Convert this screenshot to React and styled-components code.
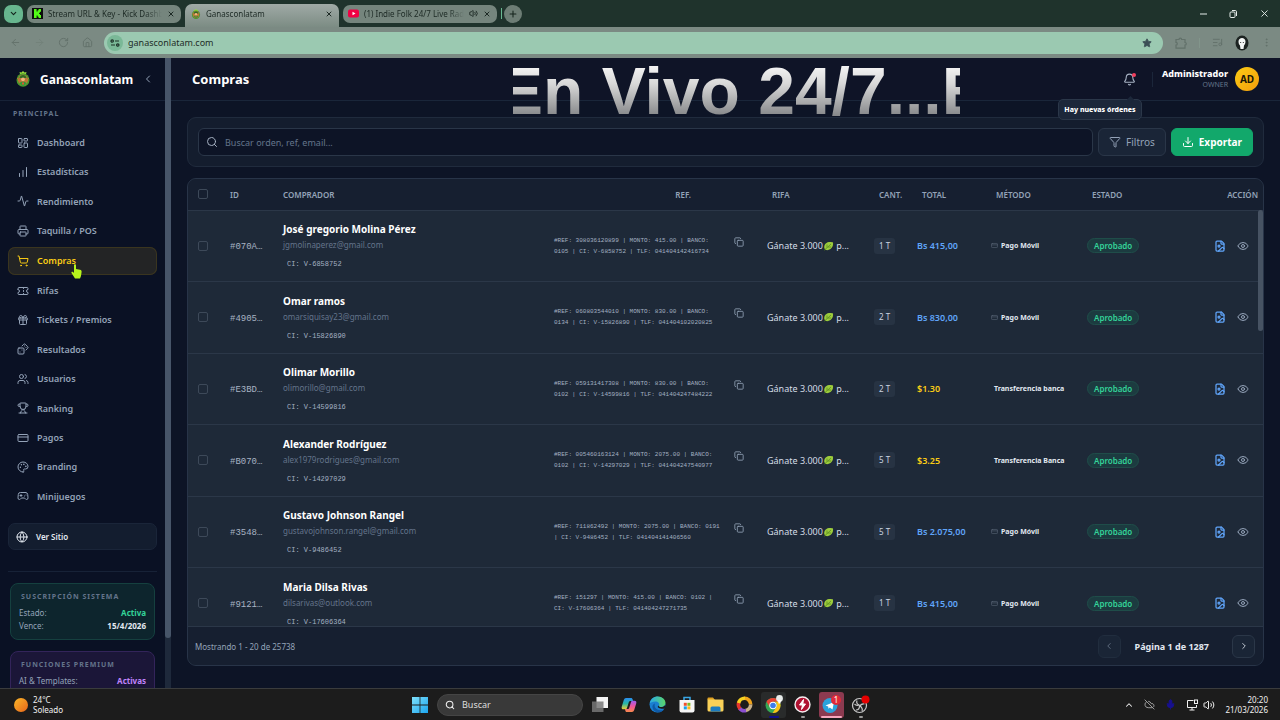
import { useState } from 'react';
import styled, { createGlobalStyle, css } from 'styled-components';
import {
  Activity,
  ArrowLeft,
  ArrowRight,
  Bell,
  ChartNoAxesColumnIncreasing,
  ChevronDown,
  ChevronLeft,
  ChevronRight,
  ChevronUp,
  CloudOff,
  Copy,
  CreditCard,
  Dices,
  Download,
  EllipsisVertical,
  Eye,
  FileImage,
  Funnel,
  Gamepad2,
  Gift,
  Globe,
  House,
  LayoutDashboard,
  ListMusic,
  Mic,
  Palette,
  Plus,
  Printer,
  RotateCw,
  Search,
  ShoppingCart,
  Star,
  Ticket,
  Trophy,
  Users,
  Volume2,
  X,
} from 'lucide-react';

const GlobalStyle = createGlobalStyle`
  * {
    box-sizing: border-box;
  }
  body {
    margin: 0;
    background: #0d1426;
    font-family: 'Noto Sans', 'Open Sans', sans-serif;
    font-size: 8px;
    color: #e2e8f0;
  }
  button, input {
    font-family: inherit;
  }
  button {
    padding: 0;
    border: 0;
    background: none;
    color: inherit;
    cursor: pointer;
  }
  svg {
    display: block;
    flex-shrink: 0;
  }
`;

const Screen = styled.div`
  display: flex;
  flex-direction: column;
  height: 100vh;
  overflow: hidden;
`;

/* browser */
const TabStrip = styled.div`
  display: flex;
  align-items: center;
  gap: 4px;
  height: 27px;
  padding: 0 6px 0 4px;
  background: #1f332c;
`;
const TabSearch = styled.button`
  display: flex;
  align-items: center;
  justify-content: center;
  width: 19px;
  height: 18px;
  border-radius: 7px;
  background: #67b68e;
  color: #14231c;
`;
const Tab = styled.div`
  display: flex;
  align-items: center;
  gap: 5px;
  width: 154px;
  height: ${(props) => (props.$active ? '23px' : '18px')};
  align-self: ${(props) => (props.$active ? 'flex-end' : 'center')};
  padding: ${(props) => (props.$active ? '0 6px 4px' : '0 6px 0 5px')};
  border-radius: ${(props) => (props.$active ? '7px 7px 0 0' : '7px')};
  background: ${(props) =>
    props.$active ? 'linear-gradient(#a0aaa6, #7c8c84)' : '#75857d'};
  color: #1c2924;
`;
const TabTitle = styled.span`
  flex: 1;
  min-width: 0;
  overflow: hidden;
  white-space: nowrap;
  font-size: 8px;
  mask-image: linear-gradient(to right, #000 85%, transparent);
`;
const TabEnd = styled.div`
  display: flex;
  align-items: center;
  gap: 2px;
`;
const NewTab = styled.button`
  display: flex;
  align-items: center;
  justify-content: center;
  width: 18px;
  height: 18px;
  border-radius: 9px;
  background: #6d7d75;
  color: #14231c;
`;
const TabDivider = styled.div`
  width: 1px;
  height: 11px;
  background: #69b892;
`;
const WindowButtons = styled.div`
  display: flex;
  gap: 20px;
  margin-left: auto;
  padding-right: 4px;
  color: #e5ece9;
`;
const Toolbar = styled.div`
  display: flex;
  align-items: center;
  height: 31px;
  padding: 0 8px;
  background: #7b8a83;
  color: #62716a;
`;
const NavButtons = styled.div`
  display: flex;
  gap: 13px;
  padding: 0 11px 0 2px;
`;
const AddressBar = styled.div`
  flex: 1;
  display: flex;
  align-items: center;
  gap: 5px;
  height: 22px;
  padding: 0 11px 0 3px;
  border-radius: 11px;
  background: #9bc9b1;
  color: #33443d;
`;
const SiteInfo = styled.button`
  display: flex;
  align-items: center;
  justify-content: center;
  width: 16px;
  height: 16px;
  border-radius: 8px;
  background: #7ab897;
`;
const Url = styled.input`
  flex: 1;
  border: 0;
  padding: 0;
  outline: none;
  background: none;
  color: #1e2d27;
  font-size: 9px;
`;
const ToolbarRight = styled.div`
  display: flex;
  align-items: center;
  gap: 12px;
  padding-left: 12px;
`;
const ToolbarLine = styled.div`
  width: 1px;
  height: 10px;
  background: #82958b;
`;

/* page */
const Page = styled.div`
  position: relative;
  flex: 1;
  display: flex;
  min-height: 0;
`;
const Sidebar = styled.aside`
  display: flex;
  flex-direction: column;
  width: 165px;
  overflow: hidden;
  background: #0a1124;
`;
const Brand = styled.div`
  display: flex;
  align-items: center;
  flex-shrink: 0;
  gap: 9px;
  height: 43px;
  padding: 0 15px;
  border-bottom: 1px solid #172237;
  color: #94a3b8;
`;
const BrandName = styled.strong`
  flex: 1;
  color: #fff;
  font-size: 12px;
`;
const GroupLabel = styled.div`
  padding: ${(props) => props.$pad || '0'};
  color: #64748b;
  font-size: 7px;
  font-weight: 700;
  line-height: 10px;
  letter-spacing: 1px;
  text-transform: uppercase;
`;
const Menu = styled.nav`
  display: flex;
  flex-direction: column;
  flex-shrink: 0;
  justify-content: space-between;
  height: 381px;
  padding: 0 8px;
`;
const MenuLink = styled.a`
  position: relative;
  display: flex;
  align-items: center;
  gap: 8px;
  height: 27px;
  padding: 0 9px;
  border-radius: 7px;
  color: #94a3b8;
  font-size: 9px;
  font-weight: 600;
  text-decoration: none;
  ${(props) =>
    props.$active &&
    css`
      height: 28px;
      background: #232425;
      box-shadow: inset 0 0 0 1px #3a351f;
      color: #facc15;
    `}
`;
const HandCursor = styled.svg`
  position: absolute;
  left: 63px;
  top: 17px;
`;
const SiteLink = styled.a`
  display: flex;
  align-items: center;
  flex-shrink: 0;
  gap: 8px;
  height: 27px;
  margin: 13px 8px 21px;
  padding: 0 7px;
  border: 1px solid #1a2539;
  border-radius: 7px;
  background: #131d2f;
  color: #e2e8f0;
  font-size: 8px;
  font-weight: 600;
  text-decoration: none;
`;
const StatusCards = styled.div`
  display: flex;
  flex-direction: column;
  gap: 11px;
  margin: 0 8px;
  padding: 11px 2px 0;
  border-top: 1px solid #172237;
`;
const StatusCard = styled.section`
  min-height: 57px;
  padding: 8px 8px 7px;
  border: 1px solid ${(props) => (props.$premium ? '#33245a' : '#15403f')};
  border-radius: 8px;
  background: ${(props) => (props.$premium ? '#1b1638' : '#0d252d')};
`;
const StatusRow = styled.div`
  display: flex;
  justify-content: space-between;
  margin-top: 1px;
  color: #94a3b8;
  font-size: 8px;
  line-height: 12px;
  b {
    color: ${(props) => props.$color || '#e2e8f0'};
  }
`;
const ScrollTrack = styled.div`
  width: 6px;
  background: #1e293b;
`;
const ScrollThumb = styled.div`
  height: 92%;
  border-radius: 0 0 3px 3px;
  background: #475569;
`;

const Main = styled.main`
  flex: 1;
  display: flex;
  flex-direction: column;
  min-width: 0;
  background: #0d1426;
`;
const Header = styled.header`
  display: flex;
  align-items: center;
  flex-shrink: 0;
  height: 43px;
  padding: 0 21px;
  border-bottom: 1px solid #1a263a;
  background: #0f1427;
`;
const Title = styled.h1`
  flex: 1;
  margin: 0;
  color: #fff;
  font-size: 13px;
`;
const BellButton = styled.button`
  position: relative;
  color: #a8b3c4;
`;
const BellDot = styled.span`
  position: absolute;
  top: 0;
  right: 0;
  width: 4px;
  height: 4px;
  border-radius: 50%;
  background: #f43f5e;
`;
const BellTip = styled.span`
  position: absolute;
  top: 26px;
  right: -6px;
  z-index: 2;
  width: 84px;
  padding: 4px 0;
  border: 1px solid #2b3749;
  border-radius: 5px;
  background: #1c273a;
  color: #fff;
  font-size: 7px;
  font-weight: 800;
  line-height: 11px;
  white-space: nowrap;
  &::before {
    content: '';
    position: absolute;
    top: -3px;
    right: 8px;
    width: 5px;
    height: 5px;
    background: #1c273a;
    transform: rotate(45deg);
  }
`;
const HeaderLine = styled.div`
  width: 1px;
  height: 15px;
  margin: 0 9px 0 16px;
  background: #1b263a;
`;
const UserInfo = styled.div`
  margin-right: 7px;
  text-align: right;
`;
const UserName = styled.div`
  color: #fff;
  font-size: 9px;
  font-weight: 800;
  line-height: 12px;
`;
const UserRole = styled.div`
  color: #64748b;
  font-size: 7px;
  line-height: 10px;
`;
const Avatar = styled.div`
  display: flex;
  align-items: center;
  justify-content: center;
  width: 24px;
  height: 24px;
  border-radius: 50%;
  background: linear-gradient(135deg, #facc15, #f59e0b);
  color: #1a1608;
  font-size: 10px;
  font-weight: 700;
`;
const Marquee = styled.div`
  position: absolute;
  z-index: 3;
  top: -3px;
  left: 513px;
  width: 447px;
  overflow: hidden;
  font-family: 'Liberation Sans', sans-serif;
  font-size: 66px;
  font-weight: 700;
  line-height: 72px;
  text-indent: -14px;
  white-space: nowrap;
  color: transparent;
  background: linear-gradient(#f4f4f4 15%, #d8d8d8 40%, #858789 85%);
  background-clip: text;
  pointer-events: none;
`;

const Content = styled.div`
  flex: 1;
  display: flex;
  flex-direction: column;
  gap: 11px;
  min-height: 0;
  padding: 16px 16px 22px;
`;
const FilterCard = styled.form`
  display: flex;
  flex-shrink: 0;
  gap: 5px;
  padding: 10px;
  border: 1px solid #202b3d;
  border-radius: 9px;
  background: #141d2e;
`;
const SearchBox = styled.label`
  flex: 1;
  display: flex;
  align-items: center;
  gap: 7px;
  height: 28px;
  padding: 0 7px;
  border: 1px solid #2a3648;
  border-radius: 6px;
  background: #0d1426;
  color: #a5b1c2;
`;
const SearchInput = styled.input`
  flex: 1;
  padding: 0;
  border: 0;
  outline: none;
  background: none;
  color: #e2e8f0;
  font-size: 9px;
  &::placeholder {
    color: #64748b;
  }
`;
const ToolButton = styled.button`
  display: flex;
  align-items: center;
  justify-content: center;
  gap: 5px;
  padding: 0 10px;
  border: 1px solid #2a3648;
  border-radius: 6px;
  background: #1a2537;
  color: #94a3b8;
  font-size: 10px;
  ${(props) =>
    props.$primary &&
    css`
      border-color: #12a86b;
      background: #12a86b;
      color: #fff;
      font-weight: 700;
    `}
`;
const TableCard = styled.section`
  flex: 1;
  display: flex;
  flex-direction: column;
  min-height: 0;
  overflow: hidden;
  border: 1px solid #283448;
  border-radius: 9px;
  background: #1e2938;
`;
const TableScroll = styled.div`
  position: relative;
  flex: 1;
  min-height: 0;
  overflow: hidden;
`;
const TableThumb = styled.div`
  position: absolute;
  top: 31px;
  right: 0;
  width: 5px;
  height: 121px;
  border-radius: 3px;
  background: #475363;
`;
const Table = styled.table`
  width: 100%;
  table-layout: fixed;
  border-collapse: collapse;
`;
const Col = styled.col`
  width: ${(props) => props.$width};
`;
const Th = styled.th`
  height: 31px;
  padding: 0 ${(props) => props.$right || '0'} 0 ${(props) => props.$left || '16px'};
  border-bottom: 1px solid #2b3748;
  background: #161f30;
  color: #94a3b8;
  font-size: 8px;
  font-weight: 600;
  text-align: ${(props) => (props.$right ? 'right' : 'left')};
  white-space: nowrap;
`;
const Td = styled.td`
  height: 71px;
  padding: 0 0 0 ${(props) => props.$left || '11px'};
  border-bottom: 1px solid #2b3748;
  font-size: 9px;
  white-space: nowrap;
  tr:nth-child(even) > & {
    height: 72px;
  }
`;
const Check = styled.input.attrs({ type: 'checkbox' })`
  display: block;
  appearance: none;
  width: 10px;
  height: 10px;
  margin: 0;
  border: 1px solid #3d4959;
  border-radius: 2px;
`;
const OrderId = styled.span`
  color: #a8b3c3;
  font-family: 'Liberation Mono', monospace;
  font-size: 9px;
`;
const BuyerName = styled.div`
  color: #fff;
  font-size: 10px;
  font-weight: 700;
  line-height: 16px;
`;
const BuyerMail = styled.div`
  color: #64748b;
  font-size: 8px;
  line-height: 16px;
`;
const BuyerCi = styled.div`
  padding: 5px 4px 0;
  color: #a3b0c2;
  font-family: 'Liberation Mono', monospace;
  font-size: 7px;
  line-height: 12px;
`;
const RefBox = styled.div`
  display: flex;
  align-items: flex-start;
  justify-content: space-between;
  padding-right: 12px;
  color: #94a3b8;
`;
const RefText = styled.span`
  width: 172px;
  color: #a3b0c2;
  font-family: 'Liberation Mono', monospace;
  font-size: 6px;
  line-height: 11px;
  white-space: normal;
`;
const CopyButton = styled.button`
  padding-top: 2px;
`;
const Raffle = styled.span`
  display: flex;
  align-items: center;
  color: #d4dce6;
  font-size: 9px;
`;
const Qty = styled.span`
  display: inline-block;
  padding: 0 5px;
  border-radius: 3px;
  background: #273343;
  color: #cbd5e1;
  font-size: 8px;
  line-height: 16px;
`;
const Total = styled.span`
  color: ${(props) => (props.$usd ? '#facc15' : '#60a5fa')};
  font-size: 9px;
  font-weight: 600;
`;
const Method = styled.span`
  display: flex;
  align-items: center;
  gap: 3px;
  padding-left: ${(props) => (props.$plain ? '3px' : '0')};
  color: #e2e8f0;
  font-size: 7px;
  font-weight: 700;
  svg {
    color: #5b6879;
  }
`;
const Badge = styled.span`
  display: inline-block;
  padding: 0 6px;
  border: 1px solid #1f4d49;
  border-radius: 8px;
  background: #1c3b40;
  color: #34d399;
  font-size: 8px;
  font-weight: 600;
  line-height: 13px;
`;
const Actions = styled.div`
  display: flex;
  justify-content: flex-end;
  gap: 11px;
  padding-right: 14px;
  color: #94a3b8;
`;
const ProofButton = styled.button`
  color: #60a5fa;
`;
const TableFooter = styled.footer`
  display: flex;
  align-items: center;
  justify-content: space-between;
  flex-shrink: 0;
  height: 39px;
  padding: 0 8px 0 7px;
  border-top: 1px solid #2b3748;
  background: #161f30;
  color: #94a3b8;
  font-size: 8px;
`;
const Pager = styled.div`
  display: flex;
  align-items: center;
`;
const PageNumber = styled.span`
  padding: 0 23px 0 14px;
  color: #e2e8f0;
  font-size: 9px;
  font-weight: 700;
`;
const PageButton = styled.button`
  display: flex;
  align-items: center;
  justify-content: center;
  width: 23px;
  height: 23px;
  border: 1px solid #2b3748;
  border-radius: 6px;
  background: #1a2536;
  color: #e2e8f0;
  &:disabled {
    border-color: #212d3e;
    color: #6a778a;
  }
`;

/* taskbar */
const Taskbar = styled.div`
  display: grid;
  grid-template-columns: 1fr auto 1fr;
  align-items: center;
  height: 32px;
  border-top: 1px solid #3a3c3d;
  background: #1c1c1c;
  color: #f1f1f1;
  font-size: 8px;
`;
const Weather = styled.div`
  display: flex;
  align-items: center;
  gap: 5px;
  padding-left: 14px;
  line-height: 10px;
`;
const Sun = styled.span`
  width: 14px;
  height: 14px;
  border-radius: 50%;
  background: linear-gradient(135deg, #fbb829, #e8651a);
`;
const Apps = styled.div`
  display: flex;
  align-items: center;
`;
const AppButton = styled.button`
  position: relative;
  display: flex;
  align-items: center;
  justify-content: center;
  width: 25px;
  height: 26px;
  margin: 0 2px;
  border-radius: 3px;
  background: ${(props) => props.$bg || 'none'};
  ${(props) =>
    props.$mark &&
    css`
      &::after {
        content: '';
        position: absolute;
        bottom: 0;
        width: ${props.$markWidth || '4px'};
        height: 2px;
        border-radius: 1px;
        background: ${props.$mark};
      }
    `}
`;
const TaskSearch = styled.label`
  display: flex;
  align-items: center;
  gap: 7px;
  width: 146px;
  height: 22px;
  margin: 0 2px 0 3px;
  padding: 0 7px;
  border: 1px solid #454545;
  border-radius: 11px;
  background: #393939;
`;
const TaskInput = styled.input`
  width: 100%;
  padding: 0;
  border: 0;
  outline: none;
  background: none;
  color: #fff;
  font-size: 9px;
  &::placeholder {
    color: #dedede;
  }
`;
const Tray = styled.div`
  display: flex;
  align-items: center;
  justify-content: flex-end;
  gap: 10px;
  padding-right: 12px;
`;
const TrayPair = styled.div`
  display: flex;
  gap: 5px;
`;
const Clock = styled.div`
  font-size: 8px;
  line-height: 10px;
  text-align: right;
`;

const menu = [
  { label: 'Dashboard', icon: LayoutDashboard },
  { label: 'Estadísticas', icon: ChartNoAxesColumnIncreasing },
  { label: 'Rendimiento', icon: Activity },
  { label: 'Taquilla / POS', icon: Printer },
  { label: 'Compras', icon: ShoppingCart },
  { label: 'Rifas', icon: Ticket },
  { label: 'Tickets / Premios', icon: Gift },
  { label: 'Resultados', icon: Dices },
  { label: 'Usuarios', icon: Users },
  { label: 'Ranking', icon: Trophy },
  { label: 'Pagos', icon: CreditCard },
  { label: 'Branding', icon: Palette },
  { label: 'Minijuegos', icon: Gamepad2 },
];

const orders = [
  {
    id: '#070A…',
    name: 'José gregorio Molina Pérez',
    mail: 'jgmolinaperez@gmail.com',
    ci: 'V-6858752',
    ref: '#REF: 308036120899 | MONTO: 415.00 | BANCO: 0105 | CI: V-6858752 | TLF: 041404142416734',
    qty: 1,
    total: 'Bs 415,00',
    method: 'Pago Móvil',
  },
  {
    id: '#4905…',
    name: 'Omar ramos',
    mail: 'omarsiquisay23@gmail.com',
    ci: 'V-15826890',
    ref: '#REF: 060803544010 | MONTO: 830.00 | BANCO: 0134 | CI: V-15826890 | TLF: 041404102020825',
    qty: 2,
    total: 'Bs 830,00',
    method: 'Pago Móvil',
  },
  {
    id: '#E3BD…',
    name: 'Olimar Morillo',
    mail: 'olimorillo@gmail.com',
    ci: 'V-14599816',
    ref: '#REF: 059131417308 | MONTO: 830.00 | BANCO: 0102 | CI: V-14599816 | TLF: 041404247484222',
    qty: 2,
    total: '$1.30',
    method: 'Transferencia banca',
  },
  {
    id: '#B070…',
    name: 'Alexander Rodríguez',
    mail: 'alex1979rodrigues@gmail.com',
    ci: 'V-14297029',
    ref: '#REF: 005460163124 | MONTO: 2075.00 | BANCO: 0102 | CI: V-14297029 | TLF: 041404247540977',
    qty: 5,
    total: '$3.25',
    method: 'Transferencia Banca',
  },
  {
    id: '#3548…',
    name: 'Gustavo Johnson Rangel',
    mail: 'gustavojohnson.rangel@gmail.com',
    ci: 'V-9486452',
    ref: '#REF: 711862492 | MONTO: 2075.00 | BANCO: 0191 | CI: V-9486452 | TLF: 041404141406560',
    qty: 5,
    total: 'Bs 2.075,00',
    method: 'Pago Móvil',
  },
  {
    id: '#9121…',
    name: 'Maria Dilsa Rivas',
    mail: 'dilsarivas@outlook.com',
    ci: 'V-17606364',
    ref: '#REF: 151297 | MONTO: 415.00 | BANCO: 0102 | CI: V-17606364 | TLF: 041404247271735',
    qty: 1,
    total: 'Bs 415,00',
    method: 'Pago Móvil',
  },
];

function Crest({ size }) {
  return (
    <svg width={size} height={size} viewBox='0 0 16 16'>
      <path d='M8 0l1.5 1.5L11.500 1 11 3H5l-.5-2 2 .5z' fill='#9bdc3c' />
      <ellipse cx='8' cy='9' rx='6.5' ry='6.8' fill='#4c9a2c' />
      <ellipse cx='8' cy='9' rx='4.9' ry='5.4' fill='#b5793a' />
      <path d='M4.500 7c.3-4 6.700-4 7 0z' fill='#2f6b25' />
      <circle cx='8' cy='8.300' r='1.900' fill='#f0b27a' />
      <path d='M4.300 12.500c1-2.500 6.400-2.500 7.400 0L8 15.200z' fill='#2f9a3c' />
      <path d='M7 11.500h2v2H7z' fill='#e2542d' />
      <path d='M2.300 7.500c1 0 1.500 1 1.500 2.500M13.700 7.500c-1 0-1.500 1-1.500 2.500' stroke='#e06a2c' fill='none' />
    </svg>
  );
}

function Leaf() {
  return (
    <svg width='11' height='10' viewBox='0 0 22 20'>
      <path d='M4 17C0 11 4 3 12 2c3-.5 7 0 8 1 .5 4 0 8-3 11-3 3.500-8 5-11 4z' fill='#9ccc3c' />
      <path d='M2 19 16 6M8 13V7M10 12h6' stroke='#4f7d1c' strokeWidth='1.300' fill='none' />
    </svg>
  );
}

function BrowserTop() {
  return (
    <>
      <TabStrip>
        <TabSearch aria-label='Buscar pestañas'>
          <ChevronDown size={9} strokeWidth={3} />
        </TabSearch>
        <Tab>
          <svg width='11' height='11' viewBox='0 0 11 11'>
            <rect width='11' height='11' fill='#0b0f0c' />
            <path d='M2 1h2.600v2.400h1V2.200h1V1H9v2.700H8v1h-.9v1.400H8v1h1V10H6.600V8.800h-1V7.600h-1V10H2z' fill='#53fc18' />
          </svg>
          <TabTitle>Stream URL &amp; Key - Kick Dashboard</TabTitle>
          <X size={8} strokeWidth={3} />
        </Tab>
        <Tab $active>
          <Crest size={10} />
          <TabTitle>Ganasconlatam</TabTitle>
          <X size={8} strokeWidth={3} />
        </Tab>
        <Tab>
          <svg width='11' height='11' viewBox='0 0 22 22'>
            <rect y='3' width='22' height='16' rx='4' fill='#f00044' />
            <path d='M9 7.500v7l6-3.500z' fill='#fff' />
          </svg>
          <TabTitle>(1) Indie Folk 24/7 Live Radio</TabTitle>
          <Volume2 size={9} strokeWidth={2.5} />
          <X size={8} strokeWidth={3} />
        </Tab>
        <TabEnd>
          <TabDivider />
          <NewTab aria-label='Nueva pestaña'>
            <Plus size={10} strokeWidth={2.5} />
          </NewTab>
        </TabEnd>
        <WindowButtons>
          <button aria-label='Minimizar'>
            <svg width='10' height='10' viewBox='0 0 10 10'>
              <path d='M2 5h7' stroke='currentColor' />
            </svg>
          </button>
          <button aria-label='Restaurar'>
            <svg width='11' height='10' viewBox='0 0 11 10' fill='none' stroke='currentColor'>
              <rect x='2' y='3' width='5' height='5.500' rx='1' />
              <path d='M4 1.500h3.200a1.300 1.300 0 0 1 1.300 1.300V7' />
            </svg>
          </button>
          <button aria-label='Cerrar'>
            <X size={11} />
          </button>
        </WindowButtons>
      </TabStrip>
      <Toolbar>
        <NavButtons>
          <button aria-label='Atrás'>
            <ArrowLeft size={11} />
          </button>
          <button aria-label='Adelante'>
            <ArrowRight size={11} color='#728179' />
          </button>
          <button aria-label='Recargar'>
            <RotateCw size={11} />
          </button>
          <button aria-label='Inicio'>
            <House size={11} />
          </button>
        </NavButtons>
        <AddressBar>
          <SiteInfo aria-label='Información del sitio'>
            <svg width='10' height='8' viewBox='0 0 10 8' fill='none' stroke='#1c3027' strokeWidth='1.200'>
              <circle cx='2.200' cy='2' r='1.200' />
              <path d='M5 2h4M1 6h4' />
              <circle cx='7.800' cy='6' r='1.200' />
            </svg>
          </SiteInfo>
          <Url aria-label='Dirección' defaultValue='ganasconlatam.com' />
          <Star size={10} fill='#3c4f56' color='#3c4f56' />
        </AddressBar>
        <ToolbarRight>
          <svg width='12' height='12' viewBox='0 0 12 12' fill='none' stroke='currentColor' strokeWidth='1.200'>
            <path d='M1 2.500h3a1.300 1.300 0 0 1 2.600 0H10v3a1.300 1.300 0 0 1 0 2.600v3H1V8a1.300 1.300 0 0 0 0-2.600z' />
          </svg>
          <ToolbarLine />
          <ListMusic size={11} />
          <svg width='14' height='16' viewBox='0 0 14 16'>
            <ellipse cx='7' cy='8' rx='6.500' ry='7.500' fill='#1c2321' />
            <path d='M3.500 6.500C3.500 1.800 10.500 1.800 10.500 6.500c0 2-.8 3-1.500 4L8.500 14h-3L5 10.500c-.8-1-1.500-2-1.500-4z' fill='#f3f6f5' />
            <path d='M5 7.500h1.200M7.800 7.500H9' stroke='#555' />
          </svg>
          <EllipsisVertical size={11} />
        </ToolbarRight>
      </Toolbar>
    </>
  );
}

function SideMenu() {
  return (
    <Sidebar>
      <Brand>
        <Crest size={16} />
        <BrandName>Ganasconlatam</BrandName>
        <button aria-label='Contraer menú'>
          <ChevronLeft size={12} />
        </button>
      </Brand>
      <GroupLabel $pad='8px 13px 10px'>Principal</GroupLabel>
      <Menu>
        {menu.map((item) => (
          <MenuLink href='#' key={item.label} $active={item.label === 'Compras'}>
            <item.icon size={12} />
            {item.label}
            {item.label === 'Compras' && (
              <HandCursor width='11' height='15' viewBox='0 0 11 15'>
                <path
                  d='M3 1.200C3 0 5 0 5 1.200V5l4 .8c1.200.3 1.800 1 1.600 2.200L10 12l-1 2.500H4L.5 9C0 8 1.200 7.200 2 8l1 1z'
                  fill='#b6f51c'
                />
              </HandCursor>
            )}
          </MenuLink>
        ))}
      </Menu>
      <SiteLink href='#'>
        <Globe size={12} />
        Ver Sitio
      </SiteLink>
      <StatusCards>
        <StatusCard>
          <GroupLabel $pad='0 2px 4px'>Suscripción Sistema</GroupLabel>
          <StatusRow $color='#34d399'>
            Estado: <b>Activa</b>
          </StatusRow>
          <StatusRow>
            Vence: <b>15/4/2026</b>
          </StatusRow>
        </StatusCard>
        <StatusCard $premium>
          <GroupLabel $pad='0 2px 4px'>Funciones Premium</GroupLabel>
          <StatusRow $color='#c084fc'>
            AI &amp; Templates: <b>Activas</b>
          </StatusRow>
        </StatusCard>
      </StatusCards>
    </Sidebar>
  );
}

function OrderRow({ order }) {
  const mobile = order.method === 'Pago Móvil';
  return (
    <tr>
      <Td $left='10px'>
        <Check aria-label={'Seleccionar ' + order.id} />
      </Td>
      <Td>
        <OrderId>{order.id}</OrderId>
      </Td>
      <Td>
        <BuyerName>{order.name}</BuyerName>
        <BuyerMail>{order.mail}</BuyerMail>
        <BuyerCi>CI: {order.ci}</BuyerCi>
      </Td>
      <Td>
        <RefBox>
          <RefText>{order.ref}</RefText>
          <CopyButton aria-label='Copiar referencia'>
            <Copy size={10} />
          </CopyButton>
        </RefBox>
      </Td>
      <Td>
        <Raffle>
          Gánate 3.000
          <Leaf />
          &nbsp;p...
        </Raffle>
      </Td>
      <Td>
        <Qty>{order.qty} T</Qty>
      </Td>
      <Td>
        <Total $usd={order.total[0] === '$'}>{order.total}</Total>
      </Td>
      <Td>
        <Method $plain={!mobile}>
          {mobile && <CreditCard size={7} />}
          {order.method}
        </Method>
      </Td>
      <Td>
        <Badge>Aprobado</Badge>
      </Td>
      <Td>
        <Actions>
          <ProofButton aria-label='Ver comprobante'>
            <FileImage size={12} strokeWidth={2.5} />
          </ProofButton>
          <button aria-label='Ver orden'>
            <Eye size={12} />
          </button>
        </Actions>
      </Td>
    </tr>
  );
}

function Orders() {
  const [search, setSearch] = useState('');
  const rows = orders.filter((order) =>
    (order.name + order.mail + order.ref).toLowerCase().includes(search.toLowerCase())
  );
  return (
    <Content>
      <FilterCard onSubmit={(e) => e.preventDefault()}>
        <SearchBox>
          <Search size={12} />
          <SearchInput
            aria-label='Buscar orden'
            placeholder='Buscar orden, ref, email...'
            value={search}
            onChange={(e) => setSearch(e.target.value)}
          />
        </SearchBox>
        <ToolButton type='button'>
          <Funnel size={12} />
          Filtros
        </ToolButton>
        <ToolButton type='button' $primary>
          <Download size={12} />
          Exportar
        </ToolButton>
      </FilterCard>
      <TableCard>
        <TableScroll>
          <Table>
            <colgroup>
              <Col $width='31px' />
              <Col $width='53px' />
              <Col />
              <Col $width='213px' />
              <Col $width='107px' />
              <Col $width='43px' />
              <Col $width='74px' />
              <Col $width='96px' />
              <Col $width='74px' />
              <Col $width='113px' />
            </colgroup>
            <thead>
              <tr>
                <Th $left='10px'>
                  <Check aria-label='Seleccionar todo' />
                </Th>
                <Th $left='11px'>ID</Th>
                <Th $left='11px'>COMPRADOR</Th>
                <Th $right='65px'>REF.</Th>
                <Th>RIFA</Th>
                <Th>CANT.</Th>
                <Th>TOTAL</Th>
                <Th>MÉTODO</Th>
                <Th>ESTADO</Th>
                <Th $right='5px'>ACCIÓN</Th>
              </tr>
            </thead>
            <tbody>
              {rows.map((order) => (
                <OrderRow order={order} key={order.id} />
              ))}
            </tbody>
          </Table>
          <TableThumb />
        </TableScroll>
        <TableFooter>
          Mostrando 1 - 20 de 25738
          <Pager>
            <PageButton aria-label='Anterior' disabled>
              <ChevronLeft size={10} />
            </PageButton>
            <PageNumber>Página 1 de 1287</PageNumber>
            <PageButton aria-label='Siguiente'>
              <ChevronRight size={10} />
            </PageButton>
          </Pager>
        </TableFooter>
      </TableCard>
    </Content>
  );
}

function WindowsBar() {
  return (
    <Taskbar>
      <Weather>
        <Sun />
        <div>
          24°C
          <br />
          Soleado
        </div>
      </Weather>
      <Apps>
        <AppButton aria-label='Inicio'>
          <svg width='16' height='16' viewBox='0 0 16 16'>
            <defs>
              <linearGradient id='win' x1='0' y1='0' x2='1' y2='1'>
                <stop offset='0' stopColor='#7fe0fb' />
                <stop offset='1' stopColor='#1ba5ee' />
              </linearGradient>
            </defs>
            <path d='M0 0h7.600v7.600H0zM8.400 0H16v7.600H8.400zM0 8.400h7.600V16H0zM8.400 8.400H16V16H8.400z' fill='url(#win)' />
          </svg>
        </AppButton>
        <TaskSearch>
          <Search size={10} strokeWidth={2.5} />
          <TaskInput aria-label='Buscar' placeholder='Buscar' />
        </TaskSearch>
        <AppButton aria-label='Vista de tareas'>
          <svg width='16' height='15' viewBox='0 0 16 15'>
            <rect x='4.500' width='11.500' height='11' fill='#f3f3f3' />
            <rect y='4.500' width='11.500' height='10.500' fill='#777' opacity='.85' />
          </svg>
        </AppButton>
        <AppButton aria-label='Copilot'>
          <svg width='16' height='16' viewBox='0 0 16 16'>
            <defs>
              <linearGradient id='copA' x1='0' y1='0' x2='0' y2='1'>
                <stop offset='0' stopColor='#2b8df0' />
                <stop offset='.5' stopColor='#28b7a4' />
                <stop offset='1' stopColor='#f4cf34' />
              </linearGradient>
              <linearGradient id='copB' x1='0' y1='0' x2='0' y2='1'>
                <stop offset='0' stopColor='#9a5cf0' />
                <stop offset='.5' stopColor='#f0549a' />
                <stop offset='1' stopColor='#f98a4a' />
              </linearGradient>
            </defs>
            <path d='M5 1h5c1 0 1.400.6 1.700 1.600L12 4H9.500c-1 0-1.500.5-1.800 1.500L6 11c-.3 1-.8 1.300-1.700 1.300H2.500C.8 12.300.3 11 .8 9.400l2-6.400C3.200 1.700 4 1 5 1z' fill='url(#copA)' />
            <path d='M11 15H6c-1 0-1.400-.6-1.700-1.600L4 12h2.500c1 0 1.500-.5 1.800-1.500L10 5c.3-1 .8-1.300 1.700-1.300h1.800c1.700 0 2.200 1.300 1.700 2.900l-2 6.400c-.4 1.300-1.200 2-2.200 2z' fill='url(#copB)' />
          </svg>
        </AppButton>
        <AppButton aria-label='Edge'>
          <svg width='17' height='17' viewBox='0 0 17 17'>
            <defs>
              <linearGradient id='edge' x1='0' y1='0' x2='1' y2='0'>
                <stop offset='0' stopColor='#2aa9e8' />
                <stop offset='1' stopColor='#5ad66a' />
              </linearGradient>
            </defs>
            <circle cx='8.500' cy='8.500' r='8' fill='#1a7fd0' />
            <path d='M.6 7.500C1.500 2.800 5 .5 8.700.5c4.600 0 7.800 3.200 7.800 6.300 0 2.600-2 4.200-4.300 4.200-2 0-2.700-.8-2.200-1.600C11 7.500 9 5.500 6.400 5.500 3.700 5.500 1.300 6.500.6 7.500z' fill='url(#edge)' />
            <path d='M6 7.500C4.500 11 7.500 14.500 11.500 14.300c1.500 0 2.500-.6 3.500-1.300-2 4-8 4.500-10.500 1C2.500 11 3.500 8 6 7.500z' fill='#0f5aa6' />
            <path d='M10 9.400c-.5.800.2 1.600 2.200 1.600 1.600 0 3-.6 3.900-2L16.800 12c-1.800 1.500-5.300.8-7.300-.2C8.300 11.300 8.500 9.800 10 9.400z' fill='#1c1c1c' />
          </svg>
        </AppButton>
        <AppButton aria-label='Microsoft Store'>
          <svg width='16' height='17' viewBox='0 0 16 17'>
            <path d='M5 4V1.500h6V4' fill='none' stroke='#39a7e6' strokeWidth='1.500' />
            <path d='M.5 4h15v10.500a2 2 0 0 1-2 2h-11a2 2 0 0 1-2-2z' fill='#f5f5f5' />
            <path d='M4.800 6.800h3v3h-3z' fill='#f0512c' />
            <path d='M8.400 6.800h3v3h-3z' fill='#7fba1f' />
            <path d='M4.800 10.400h3v3h-3z' fill='#16a0ea' />
            <path d='M8.400 10.400h3v3h-3z' fill='#fcb817' />
          </svg>
        </AppButton>
        <AppButton aria-label='Explorador'>
          <svg width='17' height='15' viewBox='0 0 17 15'>
            <path d='M.5 1.500a1 1 0 0 1 1-1H6L8 3H.5z' fill='#e0a020' />
            <path d='M.5 2.500h15a1 1 0 0 1 1 1V13a1.500 1.500 0 0 1-1.500 1.500H2A1.500 1.500 0 0 1 .5 13z' fill='#f9d158' />
            <path d='M3.500 14.500V11a1.500 1.500 0 0 1 1.500-1.500h7a1.500 1.500 0 0 1 1.500 1.500v3.500z' fill='#1c7cc0' />
          </svg>
        </AppButton>
        <AppButton aria-label='Navegador'>
          <svg width='17' height='17' viewBox='0 0 17 17' fill='none' strokeWidth='3.600'>
            <path d='M8.500 2.300a6.200 6.200 0 0 1 6.200 6.200' stroke='#f0a41c' />
            <path d='M14.700 8.500a6.200 6.200 0 0 1-5 6' stroke='#c9b08a' />
            <path d='M10 14.500a6.200 6.200 0 0 1-6.500-2.400' stroke='#8b4fd0' />
            <path d='M4 12.700A6.200 6.200 0 0 1 3 6' stroke='#e4342c' />
            <path d='M2.600 7A6.200 6.200 0 0 1 9 2.300' stroke='#f5d020' />
          </svg>
        </AppButton>
        <AppButton aria-label='Chrome' $bg='#292b2b' $mark='#10108c' $markWidth='10px'>
          <svg width='18' height='19' viewBox='0 0 18 19'>
            <circle cx='8' cy='10.500' r='7.500' fill='#34a853' />
            <path d='M1.500 6.800A7.500 7.500 0 0 1 14.500 6.800H8a3.800 3.800 0 0 0-3.400 5.300z' fill='#ea4335' />
            <path d='M14.500 6.800A7.500 7.500 0 0 1 7.600 18l3.700-5.800A4 4 0 0 0 9.800 6.800z' fill='#fbc116' />
            <circle cx='8' cy='10.500' r='3.700' fill='#fff' />
            <circle cx='8' cy='10.500' r='2.800' fill='#3b7ded' />
            <circle cx='14.500' cy='3.500' r='3.400' fill='#e8ecea' />
            <path d='M13 5h3l-.5 3.500h-2z' fill='#fff' />
          </svg>
        </AppButton>
        <AppButton aria-label='Descargas' $mark='#9a9a9a'>
          <svg width='17' height='17' viewBox='0 0 17 17'>
            <circle cx='8.500' cy='8.500' r='7.500' fill='#b01232' stroke='#f4eef0' strokeWidth='1.400' />
            <path d='M9.500 3.500 5.500 9h3l-1 4.500L11.500 8H8.800z' fill='#fff' stroke='#fff' />
          </svg>
        </AppButton>
        <AppButton aria-label='Telegram' $bg='#8c3a50' $mark='#f7a6bc' $markWidth='21px'>
          <svg width='19' height='19' viewBox='0 0 19 19'>
            <circle cx='8' cy='10.500' r='7.500' fill='#2ba3dc' />
            <path d='M3.500 10.500 12 7l-1.500 7.500-2.700-2-1.300 1.300-.3-2.300z' fill='#fff' />
            <circle cx='14' cy='5' r='5' fill='#e02a38' />
            <text x='14' y='8' fill='#fff' fontSize='8' textAnchor='middle'>1</text>
          </svg>
        </AppButton>
        <AppButton aria-label='OBS' $mark='#9a9a9a'>
          <svg width='19' height='19' viewBox='0 0 19 19'>
            <circle cx='8.500' cy='10.500' r='7' fill='#1d1d1f' stroke='#c8c8c8' strokeWidth='1.200' />
            <path
              d='M6 5.500c-1 2.500.5 4 2.500 4.500M13.500 9c-2.500-.5-4 .5-5 3M5 15c2.500 0 3.500-1.500 3.500-4M3.500 9C5 11 7 10.500 8.500 10M11 16c1-2-.5-4-2.500-5.500'
              fill='none'
              stroke='#c8c8c8'
              strokeWidth='1.200'
            />
            <circle cx='14.500' cy='4.500' r='4' fill='#e60000' />
          </svg>
        </AppButton>
      </Apps>
      <Tray>
        <ChevronUp size={10} strokeWidth={2.5} />
        <CloudOff size={11} color='#a5a5a5' />
        <Mic size={11} color='#17108f' fill='#17108f' />
        <TrayPair>
          <svg width='12' height='12' viewBox='0 0 12 12' fill='none' stroke='currentColor'>
            <path d='M7.500 1.500H1.500v7h9V6M6 8.500V11M3.500 11h5' />
            <rect x='8.500' y='1' width='3' height='3.500' />
          </svg>
          <Volume2 size={12} />
        </TrayPair>
        <Clock>
          20:20
          <br />
          21/03/2026
        </Clock>
      </Tray>
    </Taskbar>
  );
}

function App() {
  return (
    <Screen>
      <GlobalStyle />
      <BrowserTop />
      <Page>
        <SideMenu />
        <ScrollTrack>
          <ScrollThumb />
        </ScrollTrack>
        <Main>
          <Header>
            <Title>Compras</Title>
            <BellButton aria-label='Notificaciones'>
              <Bell size={13} />
              <BellDot />
              <BellTip>Hay nuevas órdenes</BellTip>
            </BellButton>
            <HeaderLine />
            <UserInfo>
              <UserName>Administrador</UserName>
              <UserRole>OWNER</UserRole>
            </UserInfo>
            <Avatar>AD</Avatar>
          </Header>
          <Orders />
        </Main>
        <Marquee>En Vivo 24/7...En Vivo 24/7</Marquee>
      </Page>
      <WindowsBar />
    </Screen>
  );
}
export default App;
